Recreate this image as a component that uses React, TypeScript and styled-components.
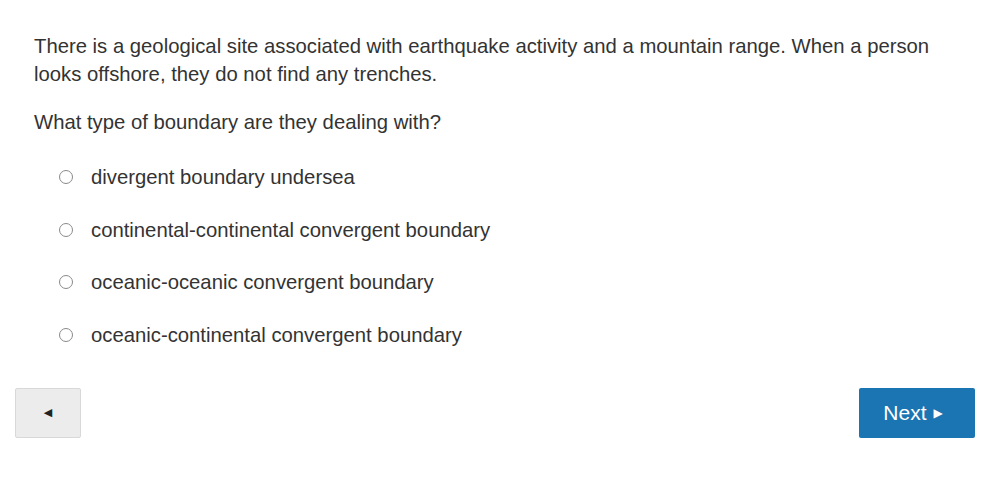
import React from "react";
import styled, { createGlobalStyle } from "styled-components";

const Global = createGlobalStyle`
  html, body { margin: 0; padding: 0; background: #ffffff; }
  body { font-family: "Liberation Sans", Arial, sans-serif; color: #333333; }
`;

const Page = styled.div`
  width: 989px;
  height: 491px;
  box-sizing: border-box;
  padding: 32px 14px 0 15px;
  display: flex;
  flex-direction: column;
`;

const Question = styled.div`
  padding: 0 0 0 19px;
  font-size: 20.3px;
  line-height: 28px;
`;

const Para = styled.p`
  margin: 0 0 20px 0;
`;

const Options = styled.div`
  display: flex;
  flex-direction: column;
  gap: 24.5px;
  padding-left: 44px;
  margin-top: 7px;
`;

const Option = styled.label`
  display: flex;
  align-items: center;
  gap: 18px;
  font-size: 20.3px;
  line-height: 28px;
  color: #333333;
`;

const Radio = styled.span`
  width: 14px;
  height: 14px;
  border-radius: 50%;
  border: 1px solid #8a8a8a;
  box-sizing: border-box;
  background: #fff;
  flex: none;
`;

const Footer = styled.div`
  display: flex;
  justify-content: space-between;
  margin-top: 39px;
`;

const PrevButton = styled.button`
  width: 66px;
  height: 50px;
  background: #ececec;
  border: 1px solid #d8d8d8;
  border-radius: 2px;
  display: flex;
  align-items: center;
  justify-content: center;
  padding: 0;
  color: #222;
  font-size: 11px;
  font-family: "DejaVu Sans", sans-serif;
`;

const NextButton = styled.button`
  width: 116px;
  height: 50px;
  background: #1b75b2;
  border: none;
  border-radius: 2px;
  color: #ffffff;
  font-family: "Liberation Sans", Arial, sans-serif;
  font-size: 21px;
  display: flex;
  align-items: center;
  justify-content: center;
  gap: 7px;
  padding: 0 8px 0 0;
`;

const Arrow = styled.span`
  font-family: "DejaVu Sans", sans-serif;
  font-size: 12px;
`;

const options = [
  "divergent boundary undersea",
  "continental-continental convergent boundary",
  "oceanic-oceanic convergent boundary",
  "oceanic-continental convergent boundary",
];

export default function App() {
  return (
    <>
      <Global />
      <Page>
        <Question>
          <Para>
            There is a geological site associated with earthquake activity and a mountain range. When a person
            looks offshore, they do not find any trenches.
          </Para>
          <Para>What type of boundary are they dealing with?</Para>
        </Question>
        <Options>
          {options.map((o) => (
            <Option key={o}>
              <Radio />
              {o}
            </Option>
          ))}
        </Options>
        <Footer>
          <PrevButton>◀</PrevButton>
          <NextButton>
            Next <Arrow>▶</Arrow>
          </NextButton>
        </Footer>
      </Page>
    </>
  );
}
